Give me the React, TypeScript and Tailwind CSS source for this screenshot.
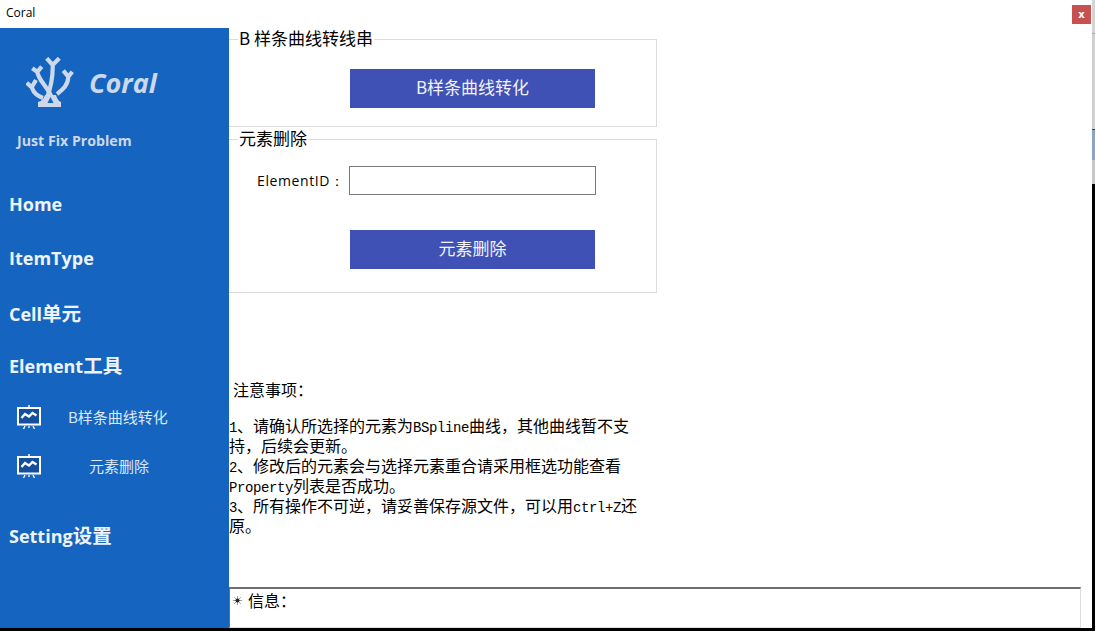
const navBold = 'font-["Open_Sans","Noto_Sans_CJK_SC",sans-serif] font-bold text-[#eef3fa] text-[18px] leading-[26px] pl-[9px]'
const mono = 'font-["Liberation_Mono",monospace] text-[14px] leading-none tracking-[-0.4px]'

function CoralLogo() {
  return (
    <svg width="48" height="50" viewBox="0 0 48 50" fill="none" stroke="#cdd8ea" strokeWidth="4.2">
      <path d="M20.7 1.3 L26.7 8 L33.3 1.3 M26.7 8 C27 20 25 30 21 41" />
      <path d="M6.3 11.3 L11.3 15 L15.7 9.7 M11.3 15 C13 24 21 29 26 41" />
      <path d="M0.7 25.7 L5.7 30.3 L10 23 M5.7 30.3 C8 37 12 39 17 41" />
      <path d="M37.3 13.7 L42.3 19.7 L46.3 14.7 M42.3 19.7 C42 29 36 33 31 37" />
      <path d="M12 50 H35 V45 C32 44 31 41 30 38 H19 C18 41 16 44 12 45 Z" fill="#cdd8ea" stroke="none" />
      <path d="M21.5 46 H27.5 L24.5 40 Z" fill="#1565c0" stroke="none" />
    </svg>
  )
}

function BoardIcon() {
  return (
    <svg width="24" height="24" viewBox="0 0 24 24" fill="none" stroke="white">
      <rect x="1" y="3" width="22" height="16.5" fill="#134f9c" strokeWidth="2" />
      <path d="M12 0 V3" strokeWidth="1.5" />
      <path d="M4.5 13 L8 9 L12 11.5 L15.5 8 L19.5 10.5" strokeWidth="2.4" />
      <path d="M8 21 L6.5 24 M16 21 L17.5 24 M12 21 V23" strokeWidth="1.3" />
    </svg>
  )
}

function StarDot() {
  return (
    <svg width="9" height="9" viewBox="0 0 9 9" className="mt-[7px]">
      <path d="M4.5 0 V9 M0 4.5 H9 M1.2 1.2 L7.8 7.8 M7.8 1.2 L1.2 7.8" stroke="#9a9a9a" strokeWidth="1" />
      <circle cx="4.5" cy="4.5" r="2" fill="#222" />
    </svg>
  )
}

function SubItem({ label, indent }: { label: string; indent: string }) {
  return (
    <div className="flex h-[49.5px] items-center pl-[17px]">
      <BoardIcon />
      <span className={`${indent} text-[15px] text-[#dce8f6]`}>{label}</span>
    </div>
  )
}

export default function App() {
  return (
    <div className='flex h-[631px] w-[1095px] flex-col overflow-hidden bg-white font-["Noto_Sans_CJK_SC",sans-serif] text-black'>
      <div className="flex min-h-0 flex-1">
        <div className="flex min-w-0 flex-1 flex-col">
          {/* title bar */}
          <div className="flex h-[28px] shrink-0 items-start justify-between">
            <span className='pl-[6px] pt-[3px] font-["Open_Sans",sans-serif] text-[12px] leading-[20px]'>Coral</span>
            <div className='mr-[1px] mt-[5px] flex h-[19px] w-[19px] items-center justify-center bg-[#c75050] font-["DejaVu_Sans",sans-serif] text-[10px] font-bold text-white'>x</div>
          </div>

          <div className="flex min-h-0 flex-1">
            {/* sidebar */}
            <aside className="flex w-[229px] shrink-0 flex-col bg-[#1565c0]">
              <div className="flex h-[86px] items-start pl-[26px] pt-[29px]">
                <CoralLogo />
                <span className='ml-[15px] mt-[8px] font-["Open_Sans",sans-serif] text-[27px] font-bold italic leading-[36px] text-[#cdd8ea]'>Coral</span>
              </div>
              <div className='h-[62px] pl-[17px] pt-[17px] font-["Open_Sans",sans-serif] text-[14.2px] font-bold leading-[20px] text-[#cdd8ea]'>Just Fix Problem</div>
              <div className="mt-[14px] flex flex-col">
                <div className={`${navBold} h-[55px] pt-[1px]`}>Home</div>
                <div className={`${navBold} h-[56px]`}>ItemType</div>
                <div className={`${navBold} h-[52px]`}>Cell<span className="text-[19.5px] leading-none">单元</span></div>
                <div className={`${navBold} h-[39px]`}>Element<span className="text-[19.5px] leading-none">工具</span></div>
                <SubItem label="B样条曲线转化" indent="ml-[27px]" />
                <SubItem label="元素删除" indent="ml-[48px]" />
                <div className={`${navBold} mt-[32px]`}>Setting<span className="text-[19.5px] leading-none">设置</span></div>
              </div>
            </aside>

            {/* main column */}
            <main className="flex min-w-0 flex-1 flex-col pr-[11px]">
              <div className="w-[428px]">
                <fieldset className="h-[99px] border border-l-0 border-[#dcdcdc] pl-[9px]">
                  <legend className="px-px pb-[3px] text-[17px] leading-[19px]">B 样条曲线转线串</legend>
                  <button className="ml-[112px] mt-[19px] block h-[39px] w-[245px] bg-[#3f51b5] pb-[3px] text-[17px] text-[#f2f3fa]">B样条曲线转化</button>
                </fieldset>
                <fieldset className="mt-[1px] h-[165px] border border-l-0 border-[#dcdcdc] pl-[9px]">
                  <legend className="px-px pb-[3px] text-[17px] leading-[19px]">元素删除</legend>
                  <div className="mt-[16px] flex items-center">
                    <span className='ml-[19px] w-[92px] font-["Open_Sans",sans-serif] text-[14px] tracking-[0.6px]'>ElementID：</span>
                    <input className="h-[29px] w-[247px] border border-[#7a7a7a] bg-white" />
                  </div>
                  <button className="ml-[112px] mt-[35px] block h-[39px] w-[245px] bg-[#3f51b5] pb-[3px] text-[17px] text-[#f2f3fa]">元素删除</button>
                </fieldset>
              </div>

              {/* notes */}
              <div className="mt-[86px] w-[412px] text-[16px] leading-[20px]">
                <p className="pl-[4px]">注意事项：</p>
                <p className="mt-[16px]"><span className={mono}>1</span>、请确认所选择的元素为<span className={mono}>BSpline</span>曲线，其他曲线暂不支持，后续会更新。</p>
                <p><span className={mono}>2</span>、修改后的元素会与选择元素重合请采用框选功能查看<span className={mono}>Property</span>列表是否成功。</p>
                <p><span className={mono}>3</span>、所有操作不可逆，请妥善保存源文件，可以用<span className={mono}>ctrl+Z</span>还原。</p>
              </div>

              {/* message box */}
              <div className="mt-auto flex h-[41px] items-start border border-t-2 border-[#dcdcdc] border-t-[#6e6e6e] border-l-[#6e6e6e] pl-[3px]">
                <StarDot />
                <span className="ml-[6px] mt-[1px] text-[16px] leading-[20px]">信息：</span>
              </div>
            </main>
          </div>
        </div>

        {/* desktop showing behind the window */}
        <div className="flex w-[3px] shrink-0 flex-col">
          <div className="h-[33px] bg-[#d4d4d4]" />
          <div className="h-[1px] bg-[#a8a8a8]" />
          <div className="h-[95px] bg-[#d0d0d0]" />
          <div className="h-[1px] bg-[#2c3e50]" />
          <div className="h-[30px] bg-[#8aa5c4]" />
          <div className="h-[24px] bg-[#c8c8c8]" />
          <div className="flex-1 bg-black" />
        </div>
      </div>
      <div className="h-[3px] shrink-0 bg-black" />
    </div>
  )
}
